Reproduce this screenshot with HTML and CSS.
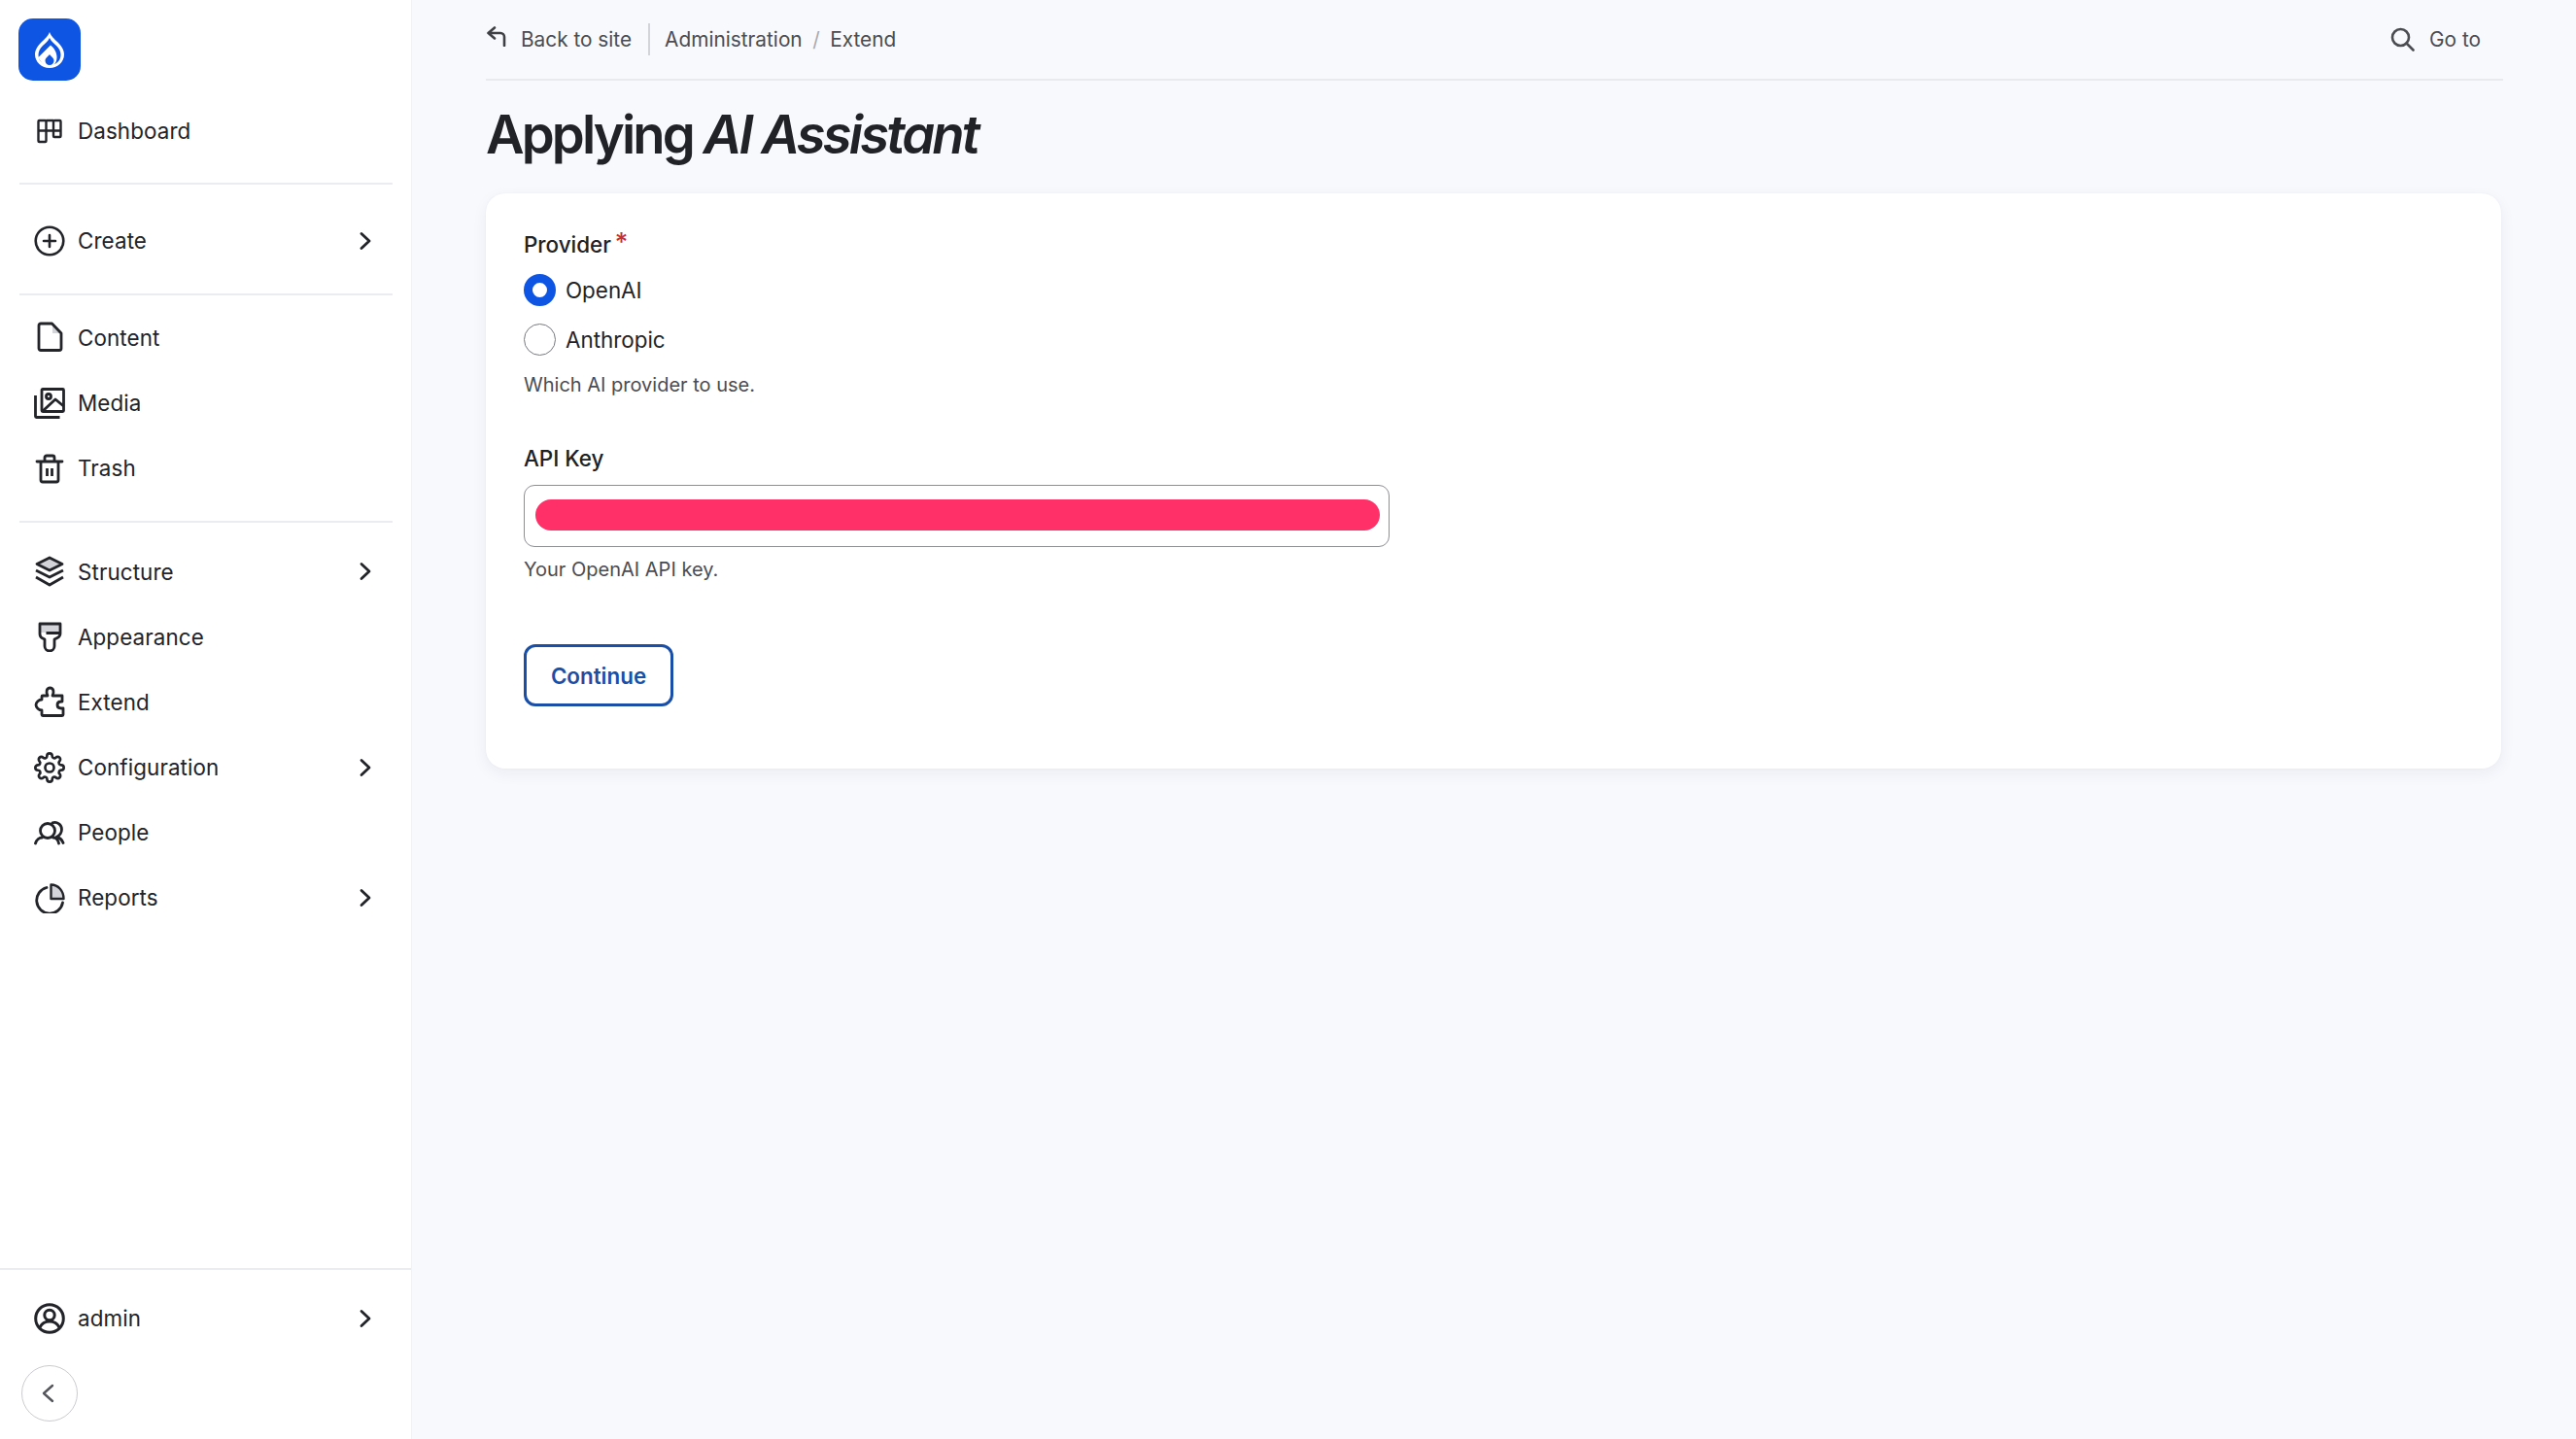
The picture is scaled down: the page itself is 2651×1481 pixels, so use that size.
FILE: index.html
```html
<!DOCTYPE html>
<html lang="en">
<head>
  <meta charset="UTF-8">
  <title>Applying AI Assistant</title>
  <link rel="stylesheet" href="styles.css">
</head>
<body>
  <aside class="sidebar">
    <a class="logo" href="#">
      <svg width="64" height="64" viewBox="0 0 64 64">
        <path fill="#fff" d="M32 14c2 5 5 7 8 10 4 4 7 8 7 13 0 8-7 14-15 14s-15-6-15-14c0-5 3-9 7-13 3-3 6-5 8-10z"/>
        <path fill="#0f55e4" d="M32 20c2 4 5 6 7 8 3 3 4.500 6 4.500 9.500C43.500 44 38 48 32 48s-11.500-4-11.500-10.500c0-3.500 1.500-6.500 4.500-9.500 2-2 5-4 7-8z"/>
        <path fill="#fff" d="M20.500 40L33 27.500c4 3 6.500 8 6.500 12.500 0 6-4 9.500-7.500 9.500-4.500 0-9-3.500-11.500-9.500z"/>
        <path fill="#0f55e4" d="M32 37c1.500 2 4.500 3.500 4.500 6.500 0 2.500-2 4.500-4.500 4.500s-4.500-2-4.500-4.500c0-3 3-4.500 4.500-6.500z"/>
      </svg>
    </a>

    <nav class="nav-group nav-top">
      <a class="nav-item" href="#">
        <svg class="icon" viewBox="0 0 32 32" fill="none" stroke="currentColor" stroke-width="2.400" stroke-linejoin="round"><rect x="4.500" y="5" width="8" height="22" rx="1"/><rect x="20" y="5" width="7.500" height="17" rx="1"/><path d="M12.500 5H20M4.500 15.500h23"/></svg>
        <span>Dashboard</span>
      </a>
    </nav>

    <nav class="nav-group nav-create">
      <a class="nav-item" href="#">
        <svg class="icon" viewBox="0 0 32 32" fill="none" stroke="currentColor" stroke-width="2.600"><circle cx="16" cy="16" r="14.300"/><path d="M16 10v12M10 16h12" stroke-linecap="round"/></svg>
        <span>Create</span>
        <svg class="chev" viewBox="0 0 16 20" fill="none" stroke="currentColor" stroke-width="2.800"><path d="M4 2.500l8 7.500-8 7.500" stroke-linecap="round" stroke-linejoin="round"/></svg>
      </a>
    </nav>

    <nav class="nav-group nav-content">
      <a class="nav-item" href="#">
        <svg class="icon" viewBox="0 0 32 32" fill="none" stroke="currentColor" stroke-width="2.800" stroke-linejoin="round"><path fill="#d3d4d9" stroke="none" d="M19 3l9 9h-9z"/><path d="M7 2h11.500L28 12v15.500a2 2 0 0 1-2 2H7a2 2 0 0 1-2-2V4a2 2 0 0 1 2-2z"/></svg>
        <span>Content</span>
      </a>
      <a class="nav-item" href="#">
        <svg class="icon" viewBox="0 0 32 32" fill="none" stroke="currentColor" stroke-width="2.800" stroke-linejoin="round"><rect x="8" y="1.500" width="22.500" height="23" rx="1"/><path d="M1.500 8v21.500a1 1 0 0 0 1 1h24"/><circle cx="15" cy="9" r="2.500"/><path d="M9 24l13-12 8.500 7"/></svg>
        <span>Media</span>
      </a>
      <a class="nav-item" href="#">
        <svg class="icon" viewBox="0 0 32 32" fill="none" stroke="currentColor" stroke-width="2.800"><path d="M3 9h26M7 9v19a2 2 0 0 0 2 2h14a2 2 0 0 0 2-2V9M11 9V5a2 2 0 0 1 2-2h6a2 2 0 0 1 2 2v4" stroke-linecap="round"/><path d="M13.500 16v8M18.500 16v8"/></svg>
        <span>Trash</span>
      </a>
    </nav>

    <nav class="nav-group nav-structure">
      <a class="nav-item" href="#">
        <svg class="icon" viewBox="0 0 32 32" fill="none" stroke="currentColor" stroke-width="2.800" stroke-linejoin="round"><path fill="#d3d4d9" d="M16 2l13 6.500L16 15 3 8.500z"/><path d="M2 15l14 7 14-7M2 22l14 8 14-8"/></svg>
        <span>Structure</span>
        <svg class="chev" viewBox="0 0 16 20" fill="none" stroke="currentColor" stroke-width="2.800"><path d="M4 2.500l8 7.500-8 7.500" stroke-linecap="round" stroke-linejoin="round"/></svg>
      </a>
      <a class="nav-item" href="#">
        <svg class="icon" viewBox="0 0 32 32" fill="none" stroke="currentColor" stroke-width="2.800" stroke-linejoin="round"><path fill="#d3d4d9" stroke="none" d="M6 3h21v9H6z"/><path d="M6 3h21v10c0 2-1 3.500-3 4.500l-3 1.500v7a5 5 0 0 1-10 0v-7l-3-1.500c-2-1-2-2.500-2-4.500zM12.500 12.500H27"/></svg>
        <span>Appearance</span>
      </a>
      <a class="nav-item" href="#">
        <svg class="icon" viewBox="0 0 32 32" fill="none" stroke="currentColor" stroke-width="2.800" stroke-linejoin="round"><path d="M9 30.500a1 1 0 0 1-1-1V25c-3 0-6-3-6-5.500S5 14 8 14v-3a1 1 0 0 1 1-1h5c-2-4-1-8 2.500-8S21 6 19 10h10v6h-1c-3 0-4 2-4 3.500s1 3.500 4 3.500h2v6.500a1 1 0 0 1-1 1z"/></svg>
        <span>Extend</span>
      </a>
      <a class="nav-item" href="#">
        <svg class="icon" viewBox="0 0 24 24" fill="none" stroke="currentColor" stroke-width="2"><circle cx="12" cy="12" r="3.400"/><path d="M19.400 15a1.650 1.650 0 0 0 .33 1.820l.06.06a2 2 0 0 1 0 2.830 2 2 0 0 1-2.830 0l-.06-.06a1.650 1.650 0 0 0-1.820-.33 1.650 1.650 0 0 0-1 1.510V21a2 2 0 0 1-2 2 2 2 0 0 1-2-2v-.09A1.650 1.650 0 0 0 9 19.400a1.650 1.650 0 0 0-1.820.33l-.06.06a2 2 0 0 1-2.830 0 2 2 0 0 1 0-2.830l.06-.06a1.650 1.650 0 0 0 .33-1.820 1.650 1.650 0 0 0-1.510-1H3a2 2 0 0 1-2-2 2 2 0 0 1 2-2h.09A1.650 1.650 0 0 0 4.600 9a1.650 1.650 0 0 0-.33-1.820l-.06-.06a2 2 0 0 1 0-2.830 2 2 0 0 1 2.830 0l.06.06a1.650 1.650 0 0 0 1.820.33H9a1.650 1.650 0 0 0 1-1.510V3a2 2 0 0 1 2-2 2 2 0 0 1 2 2v.09a1.650 1.650 0 0 0 1 1.510 1.650 1.650 0 0 0 1.820-.33l.06-.06a2 2 0 0 1 2.830 0 2 2 0 0 1 0 2.830l-.06.06a1.650 1.650 0 0 0-.33 1.820V9a1.650 1.650 0 0 0 1.510 1H21a2 2 0 0 1 2 2 2 2 0 0 1-2 2h-.09a1.650 1.650 0 0 0-1.510 1z"/></svg>
        <span>Configuration</span>
        <svg class="chev" viewBox="0 0 16 20" fill="none" stroke="currentColor" stroke-width="2.800"><path d="M4 2.500l8 7.500-8 7.500" stroke-linecap="round" stroke-linejoin="round"/></svg>
      </a>
      <a class="nav-item" href="#">
        <svg class="icon" viewBox="0 0 32 32" fill="none" stroke="currentColor" stroke-width="2.800" stroke-linecap="round" stroke-linejoin="round"><circle cx="14" cy="14" r="7.500"/><path d="M1.500 27c1-3.500 4-6 7-6M19.500 21c3 0 5.500 2.500 6 6M19 5.800c5-1.500 9.500 2 9.500 6.700 0 3.500-2.500 6.500-5.500 8 3 .5 6 3 7 6"/></svg>
        <span>People</span>
      </a>
      <a class="nav-item" href="#">
        <svg class="icon" viewBox="0 0 32 32" fill="none" stroke="currentColor" stroke-width="2.800" stroke-linejoin="round"><path fill="#d3d4d9" stroke-width="2.400" d="M17.500 2.500V17h13c0-8-5.500-14.500-13-14.500z"/><path d="M13 5.500A13.500 13.500 0 1 0 29.500 21" stroke-linecap="round"/></svg>
        <span>Reports</span>
        <svg class="chev" viewBox="0 0 16 20" fill="none" stroke="currentColor" stroke-width="2.800"><path d="M4 2.500l8 7.500-8 7.500" stroke-linecap="round" stroke-linejoin="round"/></svg>
      </a>
    </nav>

    <div class="sidebar-footer">
      <a class="nav-item" href="#">
        <svg class="icon" viewBox="0 0 32 32" fill="none" stroke="currentColor" stroke-width="3"><circle cx="16" cy="16" r="14.300"/><circle cx="16" cy="12.500" r="5.200"/><path d="M6 25c2-4 6-6 10-6s8 2 10 6"/></svg>
        <span>admin</span>
        <svg class="chev" viewBox="0 0 16 20" fill="none" stroke="currentColor" stroke-width="2.800"><path d="M4 2.500l8 7.500-8 7.500" stroke-linecap="round" stroke-linejoin="round"/></svg>
      </a>
      <button class="collapse" type="button">
        <svg width="18" height="22" viewBox="0 0 18 22" fill="none" stroke="#55565b" stroke-width="2.400"><path d="M13 3l-9 8 9 8" stroke-linecap="round" stroke-linejoin="round"/></svg>
      </button>
    </div>
  </aside>

  <main class="main">
    <header class="topbar">
      <a class="back" href="#">
        <svg width="22" height="22" viewBox="0 0 22 22" fill="none" stroke="#3f4045" stroke-width="2.600" stroke-linecap="round" stroke-linejoin="round"><path d="M9 2.500L2.500 8 9 13.500M2.500 8H15a4 4 0 0 1 4 4v9"/></svg>
        <span>Back to site</span>
      </a>
      <div class="crumbs">
        <a href="#">Administration</a>
        <span class="slash">/</span>
        <a href="#">Extend</a>
      </div>
      <a class="goto" href="#">
        <svg width="25" height="25" viewBox="0 0 25 25" fill="none" stroke="#4b4c52" stroke-width="2.600" stroke-linecap="round"><circle cx="10.500" cy="10.500" r="8.500"/><path d="M16.500 16.500l7 7"/></svg>
        <span>Go to</span>
      </a>
    </header>

    <h1 class="title">Applying <em>AI Assistant</em></h1>

    <form class="card">
      <div class="field-label">Provider<span class="req">*</span></div>
      <div class="radios">
        <label class="radio"><span class="dot dot-on"></span>OpenAI</label>
        <label class="radio"><span class="dot"></span>Anthropic</label>
      </div>
      <p class="help help-provider">Which AI provider to use.</p>

      <div class="field-label label-key">API Key</div>
      <div class="input"><span class="redact"></span></div>
      <p class="help help-key">Your OpenAI API key.</p>

      <button class="btn" type="button">Continue</button>
    </form>
  </main>
</body>
</html>
```

FILE: styles.css
```css
* {
  box-sizing: border-box;
}

html, body {
  height: 100%;
}

body {
  margin: 0;
  display: flex;
  height: 1481px;
  overflow: hidden;
  background: #f8f9fd;
  color: #232429;
  font-family: Inter, "Liberation Sans", sans-serif;
  font-size: 22.4px;
}

a {
  color: inherit;
  text-decoration: none;
}

/* sidebar */
.sidebar {
  width: 424px;
  flex: none;
  display: flex;
  flex-direction: column;
  background: #fff;
  border-right: 1px solid #f1f2f7;
}

.logo {
  display: block;
  width: 64px;
  height: 64px;
  margin: 19px 0 0 19px;
  background: #0f55e4;
  border-radius: 15px;
}

.logo svg {
  display: block;
}

.nav-group {
  margin: 0 19px 0 20px;
  border-bottom: 2px solid #ebecf0;
}

.nav-top {
  margin-top: 18px;
  padding-bottom: 20px;
}

.nav-create {
  padding: 24px 0 21px;
}

.nav-content {
  padding: 9.5px 0 21px;
}

.nav-structure {
  padding-top: 16px;
  border-bottom: 0;
}

.nav-item {
  display: flex;
  align-items: center;
  height: 67.2px;
  padding: 0 15px;
  gap: 13px;
  letter-spacing: 0.1px;
}

.nav-item span {
  flex: 1;
}

.icon {
  width: 32px;
  height: 32px;
  flex: none;
}

.chev {
  width: 16px;
  height: 20px;
  flex: none;
  margin-right: 5px;
}

.sidebar-footer {
  margin-top: auto;
  height: 176px;
  border-top: 2px solid #ebecf0;
  padding: 16px 19px 0 20px;
}

.collapse {
  display: flex;
  align-items: center;
  justify-content: center;
  width: 58px;
  height: 58px;
  margin: 15px 0 0 2px;
  padding: 0 3px 0 0;
  background: #fff;
  border: 1px solid #ccccd0;
  border-radius: 50%;
}

/* main column */
.main {
  flex: 1;
  min-width: 0;
  padding: 0 75px 0 76px;
}

.topbar {
  display: flex;
  align-items: center;
  height: 83px;
  border-bottom: 2px solid #e9eaee;
  color: #4b4c52;
  font-size: 20.8px;
  padding-bottom: 1px;
}

.back {
  display: flex;
  align-items: center;
  gap: 14px;
  height: 33px;
  padding-right: 17px;
  border-right: 2px solid #d3d4d9;
}

.back svg {
  margin-top: -6px;
}

.crumbs {
  display: flex;
  align-items: center;
  gap: 10.5px;
  margin-left: 15px;
}

.slash {
  color: #a9aaaf;
}

.goto {
  display: flex;
  align-items: center;
  gap: 15px;
  margin-left: auto;
  margin-right: 23px;
}

.title {
  margin: 22px 0 0;
  font-size: 54.4px;
  line-height: 66px;
  font-weight: 600;
  letter-spacing: -2.85px;
  color: #212228;
}

.card {
  height: 592px;
  margin: 28px 2px 0 0;
  padding: 37px 39px 0;
  background: #fff;
  border-radius: 20px;
  box-shadow: 0 0 2px rgba(30, 40, 90, 0.05), 0 5px 16px rgba(30, 40, 90, 0.06);
}

.field-label {
  font-weight: 500;
  line-height: 32px;
  font-size: 22.4px;
  color: #202126;
}

.req {
  color: #d02a35;
  margin-left: 4px;
  position: relative;
  top: -2px;
  font-size: 26px;
  line-height: 20px;
}

.radios {
  display: flex;
  flex-direction: column;
  gap: 18px;
  margin-top: 14px;
}

.radio {
  display: flex;
  align-items: center;
  gap: 10px;
  height: 33px;
}

.dot {
  width: 33px;
  height: 33px;
  background: #fff;
  border: 1px solid #77787d;
  border-radius: 50%;
}

.dot-on {
  border: 9px solid #0f55e4;
}

.help {
  margin: 0;
  line-height: 30px;
  font-size: 20px;
  color: #4b4c52;
}

.help-provider {
  margin-top: 15px;
}

.label-key {
  margin-top: 45px;
}

.input {
  display: flex;
  align-items: center;
  width: 891px;
  height: 64px;
  margin-top: 11px;
  padding: 0 9px 3px 11px;
  border: 1px solid #8e8f94;
  border-radius: 11px;
  background: #fff;
}

.redact {
  flex: 1;
  height: 32px;
  border-radius: 16px;
  background: #ff3068;
}

.help-key {
  margin-top: 8px;
}

.btn {
  display: block;
  width: 154px;
  height: 64px;
  margin-top: 62px;
  padding: 0;
  background: #fff;
  border: 3px solid #1a4fa8;
  border-radius: 12px;
  color: #1a4fa8;
  font-family: inherit;
  font-size: 22.4px;
  font-weight: 600;
}
```
